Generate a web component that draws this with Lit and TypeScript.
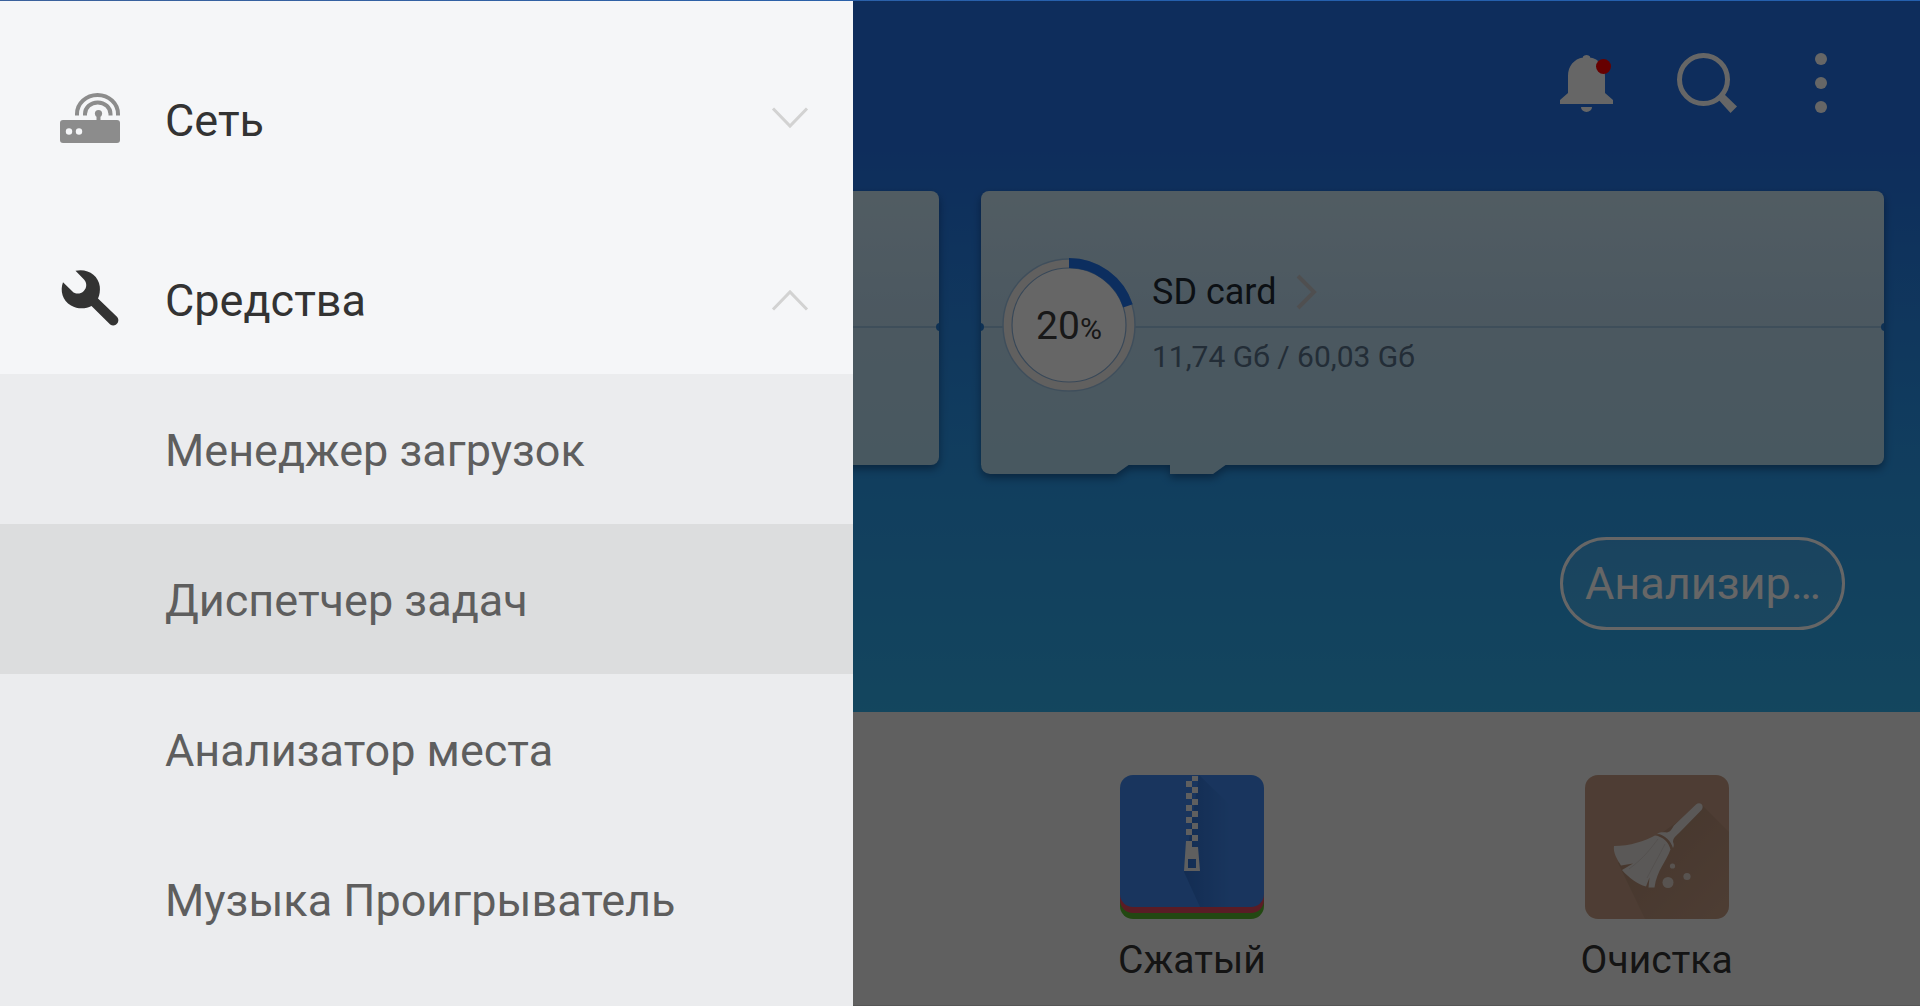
import { LitElement, html, svg, css } from "lit";
import { customElement, property } from "lit/decorators.js";
import { classMap } from "lit/directives/class-map.js";

const routerIcon = svg`
  <path d="M3 27h54a3 3 0 0 1 3 3v17a3 3 0 0 1-3 3H3a3 3 0 0 1-3-3V30a3 3 0 0 1 3-3z" fill="#8c8c8c" />
  <circle cx="9" cy="38.500" r="3.200" fill="#f5f6f8" />
  <circle cx="19" cy="38.500" r="3.200" fill="#f5f6f8" />
  <circle cx="38.500" cy="20.500" r="3.600" fill="#8c8c8c" />
  <path d="M38.500 20v8" stroke="#8c8c8c" stroke-width="4" />
  <path d="M17 22.500V21a20.500 19 0 0 1 41 0v1.500M25 22.500V21a12.700 11.500 0 0 1 25.500 0v1.500" fill="none" stroke="#8c8c8c" stroke-width="4" />
`;

const wrenchIcon = svg`
  <path d="M15.500 0.800C27 -2 38.500 5 39.800 16.500c.4 4-.1 8.500-1.800 12L57.200 47c3.700 4.700-2 10.800-7 7.500L31.500 36C26 38.800 18 39.500 11 35.500 2.500 30.500-.2 21 3 12.300L12.500 21.500c2.500 2.800 8 3 11.300-.5 3.500-3.500 3-8.500.2-11.500z" fill="#333" />
`;

@customElement("drawer-group")
export class DrawerGroup extends LitElement {
  @property() label = "";
  @property({ type: Boolean }) open = false;
  @property({ attribute: false }) icon: unknown = null;
  @property({ attribute: false }) items: string[] = [];
  @property() selected = "";

  static styles = css`
    :host {
      display: block;
    }
    .head,
    .item {
      display: flex;
      align-items: center;
      width: 100%;
      height: 150px;
      box-sizing: border-box;
      border: 0;
      margin: 0;
      background: none;
      font: 400 45px/54px Roboto, "Noto Sans", sans-serif;
      text-align: left;
      cursor: pointer;
    }
    .head {
      gap: 45px;
      padding: 0 45px 0 60px;
      color: #333;
    }
    .label {
      flex: 1;
      padding-top: 4px;
    }
    .icon {
      width: 60px;
      height: 60px;
      overflow: visible;
    }
    .chevron {
      width: 36px;
      height: 24px;
      overflow: visible;
      fill: none;
      stroke: #d2d2d2;
      stroke-width: 3;
    }
    .list {
      list-style: none;
      margin: 0;
      padding: 0;
      background: #ebecee;
    }
    .item {
      padding: 4px 45px 0 165px;
      color: #5e5e5e;
    }
    .item.selected {
      background: #dcddde;
    }
  `;

  render() {
    return html`
      <button class="head" aria-expanded=${this.open ? "true" : "false"}>
        <svg class="icon" viewBox="0 0 60 60" aria-hidden="true">${this.icon}</svg>
        <span class="label">${this.label}</span>
        <svg class="chevron" viewBox="0 0 36 24" aria-hidden="true">
          ${this.open
            ? svg`<path d="M1 22.500 18 5l17 17.500" />`
            : svg`<path d="M1 1.500 18 19 35 1.500" />`}
        </svg>
      </button>
      ${this.open
        ? html`<ul class="list">
            ${this.items.map(
              (name) => html`<li>
                <button class=${classMap({ item: true, selected: name === this.selected })}>${name}</button>
              </li>`
            )}
          </ul>`
        : null}
    `;
  }
}

@customElement("storage-card")
export class StorageCard extends LitElement {
  @property() name = "";
  @property() usage = "";
  @property({ type: Number }) percent = 0;

  static styles = css`
    :host {
      display: block;
      position: relative;
      height: 274px;
      font-family: Roboto, "Noto Sans", sans-serif;
    }
    .plate {
      position: absolute;
      inset: 0;
      filter: drop-shadow(0 4px 4px rgba(0, 20, 60, 0.45));
    }
    .face {
      height: 100%;
      border-radius: 8px;
      background: linear-gradient(#cbe7f6, #bddcf1 45%, #b4dcf1);
    }
    .face.tabbed {
      border-bottom-left-radius: 0;
    }
    .tabs {
      position: absolute;
      top: calc(100% - 1px);
      left: 0;
      width: 246px;
      height: 10px;
      fill: #b4dcf1;
    }
    .marks {
      position: absolute;
      inset: 0;
      overflow: hidden;
    }
    .seam {
      position: absolute;
      top: 135px;
      left: 0;
      right: 0;
      height: 2px;
      background: #9cc4e2;
    }
    .pin {
      position: absolute;
      top: 132px;
      width: 8px;
      height: 8px;
      border-radius: 50%;
      background: #257cd2;
    }
    .pin.left {
      left: -5px;
    }
    .pin.right {
      right: -5px;
    }
    .content {
      position: relative;
      display: flex;
      align-items: center;
      gap: 16px;
      height: 100%;
      box-sizing: border-box;
      padding: 0 21px 6px;
    }
    .gauge {
      display: grid;
      place-items: center;
      flex: none;
      width: 134px;
      height: 134px;
    }
    .gauge > * {
      grid-area: 1 / 1;
    }
    .ring {
      width: 134px;
      height: 134px;
    }
    .value {
      padding-top: 4px;
      font-size: 39px;
      line-height: 48px;
      color: #3c3c3c;
    }
    .unit {
      font-size: 30px;
    }
    .info {
      display: flex;
      flex-direction: column;
      gap: 26px;
      padding-bottom: 4px;
    }
    .name {
      display: flex;
      align-items: center;
      gap: 18px;
      font-size: 36px;
      line-height: 42px;
      color: #1f2a33;
      text-decoration: none;
    }
    .arrow {
      width: 24px;
      height: 36px;
      fill: none;
      stroke: #c6c6c8;
      stroke-width: 4;
    }
    .usage {
      font-size: 30px;
      line-height: 36px;
      color: #58728a;
    }
  `;

  private arc(): string {
    const angle = (this.percent / 100) * Math.PI * 2;
    const x = 67 + 62 * Math.sin(angle);
    const y = 67 - 62 * Math.cos(angle);
    return `M67 5A62 62 0 ${this.percent > 50 ? 1 : 0} 1 ${x} ${y}`;
  }

  render() {
    return html`
      <div class="plate">
        <div class=${classMap({ face: true, tabbed: !!this.name })}></div>
        ${this.name
          ? html`<svg class="tabs" viewBox="0 0 246 10" aria-hidden="true">
              <path d="M0 0h149l-14 10H9Q0 9 0 0zM189 0h57l-14 10h-43z" />
            </svg>`
          : null}
      </div>
      <div class="marks">
        <div class="seam"></div>
        <div class="pin left"></div>
        <div class="pin right"></div>
      </div>
      ${this.name
        ? html`<div class="content">
            <div class="gauge">
              <svg class="ring" viewBox="0 0 134 134" aria-hidden="true">
                <circle cx="67" cy="67" r="66" fill="#f3efee" stroke="#9fc4e4" stroke-width="1.500" />
                <circle cx="67" cy="67" r="57" fill="#fff" stroke="#8db4dc" stroke-width="1.200" />
                <path d=${this.arc()} fill="none" stroke="#2074ee" stroke-width="10" />
              </svg>
              <span class="value">${this.percent}<span class="unit">%</span></span>
            </div>
            <div class="info">
              <a class="name" href="#sd">
                ${this.name}
                <svg class="arrow" viewBox="0 0 24 36" aria-hidden="true"><path d="M3 2l16 16L3 34" /></svg>
              </a>
              <span class="usage">${this.usage}</span>
            </div>
          </div>`
        : null}
    `;
  }
}

const zipIcon = svg`
  <defs>
    <linearGradient id="fold" x1="0" x2="1"><stop offset="0" stop-color="#002a7a" stop-opacity=".24" /><stop offset="1" stop-color="#002a7a" stop-opacity="0" /></linearGradient>
  </defs>
  <rect y="20" width="144" height="124" rx="13" fill="#58b52f" />
  <rect y="20" width="144" height="118" rx="13" fill="#e0475c" />
  <rect width="144" height="132" rx="13" fill="#3f86ea" />
  <path d="M79 0 110 30V132H80L64 97z" fill="url(#fold)" />
  <path d="M72 1h6v5h-6zM66 6h6v6h-6zM72 12h6v6h-6zM66 18h6v6h-6zM72 24h6v6h-6zM66 30h6v6h-6zM72 36h6v6h-6zM66 42h6v6h-6zM72 48h6v6h-6zM66 54h6v6h-6zM72 60h6v6h-6z" fill="#eee" />
  <path d="M66 66h6v6h6l2 24H64zM68 84v9h8v-9z" fill-rule="evenodd" fill="#eee" />
`;

const broomIcon = svg`
  <defs>
    <linearGradient id="shade" x1="0" y1="0" x2="1" y2="1"><stop offset="0" stop-color="#3a1c08" stop-opacity=".16" /><stop offset="1" stop-color="#3a1c08" stop-opacity="0" /></linearGradient>
  </defs>
  <rect width="144" height="144" rx="13" fill="#c29a82" />
  <path d="M117 30 144 57V131a13 13 0 0 1-13 13H60L33 88z" fill="url(#shade)" />
  <path d="M29 71C45 71 60 66 70 60.500c8 1 14 7 15.500 14C81 87 72 95 69.500 112.500h-6l1-10-3.500 9C52 109 44 103 37 95l11-6.500-12 2C32 84 28 78 29 71z" fill="#e2dcd9" />
  <path d="M72 58.500c3-1.500 7-1.500 10-1 4-1 5-4 7-7L111 29.500c4-3.500 9 1 5.500 5.500L94 58c-4 4-6 5-6 9 1 2 1 4 0 6-2-7-8-13-16-14.500z" fill="#e2dcd9" />
  <path d="M73 64C66 73 60 82 44 94M80 69c-6 12-12 22-18 34" fill="none" stroke="#c9c1bd" stroke-width="1" opacity=".7" />
  <circle cx="83" cy="107.500" r="5.500" fill="#dcd0c8" />
  <circle cx="102" cy="101.500" r="3.600" fill="#dcd0c8" />
  <circle cx="87.500" cy="91" r="2.600" fill="#dcd0c8" />
`;

@customElement("app-root")
export class AppRoot extends LitElement {
  static styles = css`
    :host {
      display: block;
      font-family: Roboto, "Noto Sans", sans-serif;
    }
    .screen {
      position: relative;
      display: flex;
      flex-direction: column;
      min-height: 100vh;
      overflow: hidden;
      background: #f1f1f1;
    }
    .hero {
      display: flex;
      flex-direction: column;
      padding: 53px 36px 82px;
      background: linear-gradient(#2372e6 150px, #298ae8 330px, #2b9aec 465px, #31aeec);
    }
    .toolbar {
      display: flex;
      justify-content: flex-end;
      gap: 60px;
      padding: 0 39px 78px 0;
    }
    .tool {
      display: block;
      border: 0;
      padding: 0;
      background: none;
      height: 60px;
    }
    .tool svg {
      display: block;
      height: 60px;
    }
    .cards {
      display: grid;
      grid-template-columns: 1fr 1fr;
      gap: 42px;
    }
    .analyze {
      align-self: flex-end;
      box-sizing: border-box;
      width: 285px;
      height: 93px;
      margin: 72px 39px 0 0;
      padding: 0 22px;
      border: 3px solid #fff;
      border-radius: 48px;
      background: rgba(255, 255, 255, 0.1);
      color: #fff;
      font: 400 45px/54px Roboto, "Noto Sans", sans-serif;
      text-align: left;
      white-space: nowrap;
    }
    .apps {
      display: grid;
      flex: 1;
      grid-template-columns: repeat(4, 1fr);
      align-items: start;
      padding: 63px 31px 20px 30px;
      border-bottom: 1px solid #d8d8d8;
    }
    .app {
      display: flex;
      flex-direction: column;
      align-items: center;
      gap: 17px;
      color: #333;
      font-size: 39px;
      line-height: 48px;
      text-decoration: none;
    }
    .app:first-child {
      grid-column-start: 3;
    }
    .app svg {
      width: 144px;
      height: 144px;
    }
    .scrim {
      position: absolute;
      inset: 0;
      background: rgba(0, 0, 0, 0.6);
    }
    .drawer {
      position: absolute;
      inset: 0 auto 0 0;
      width: 44.43%;
      box-sizing: border-box;
      overflow: hidden;
      display: flex;
      flex-direction: column;
      gap: 30px;
      padding-top: 44px;
      background: linear-gradient(#f5f6f8, #f5f6f8 374px, #ebecee 374px);
    }
    .status {
      position: absolute;
      inset: 0 0 auto 0;
      height: 1px;
      background: linear-gradient(90deg, #3b619c, #2560ae 60%);
    }
  `;

  render() {
    return html`
      <div class="screen">
        <main class="hero">
          <div class="toolbar">
            <button class="tool" aria-label="Уведомления">
              <svg width="60" viewBox="0 0 60 60">
                <path d="M3 51v-4l8-7V23C11 13 17 6 26 4.500V3.500a4 3 0 0 1 7 0v1C42 6 48 13 48 23v17l8 7v4zM24 54h11a5.500 5 0 0 1-11 0z" fill="#fff" />
                <circle cx="46.500" cy="13.500" r="7.500" fill="#ff0000" />
              </svg>
            </button>
            <button class="tool" aria-label="Поиск">
              <svg width="60" viewBox="0 0 60 60">
                <circle cx="26.500" cy="26.500" r="24" fill="none" stroke="#fff" stroke-width="5" />
                <path d="M40 45 53.500 60l6.500-6.500L46 40z" fill="#fff" />
              </svg>
            </button>
            <button class="tool" aria-label="Меню">
              <svg width="48" viewBox="0 0 48 60" fill="#fff">
                <circle cx="24" cy="6" r="6" />
                <circle cx="24" cy="30" r="6" />
                <circle cx="24" cy="54" r="6" />
              </svg>
            </button>
          </div>
          <div class="cards">
            <storage-card></storage-card>
            <storage-card name="SD card" usage="11,74 Gб / 60,03 Gб" percent="20"></storage-card>
          </div>
          <button class="analyze">Анализир…</button>
        </main>
        <nav class="apps">
          <a class="app" href="#zip"><svg viewBox="0 0 144 144" aria-hidden="true">${zipIcon}</svg>Сжатый</a>
          <a class="app" href="#clean"><svg viewBox="0 0 144 144" aria-hidden="true">${broomIcon}</svg>Очистка</a>
        </nav>
        <div class="scrim"></div>
        <aside class="drawer">
          <drawer-group label="Сеть" .icon=${svg`<g transform="translate(0 4)">${routerIcon}</g>`}></drawer-group>
          <drawer-group
            label="Средства"
            open
            selected="Диспетчер задач"
            .icon=${svg`<g transform="translate(0 1)">${wrenchIcon}</g>`}
            .items=${["Менеджер загрузок", "Диспетчер задач", "Анализатор места", "Музыка Проигрыватель"]}
          ></drawer-group>
        </aside>
        <div class="status"></div>
      </div>
    `;
  }
}
